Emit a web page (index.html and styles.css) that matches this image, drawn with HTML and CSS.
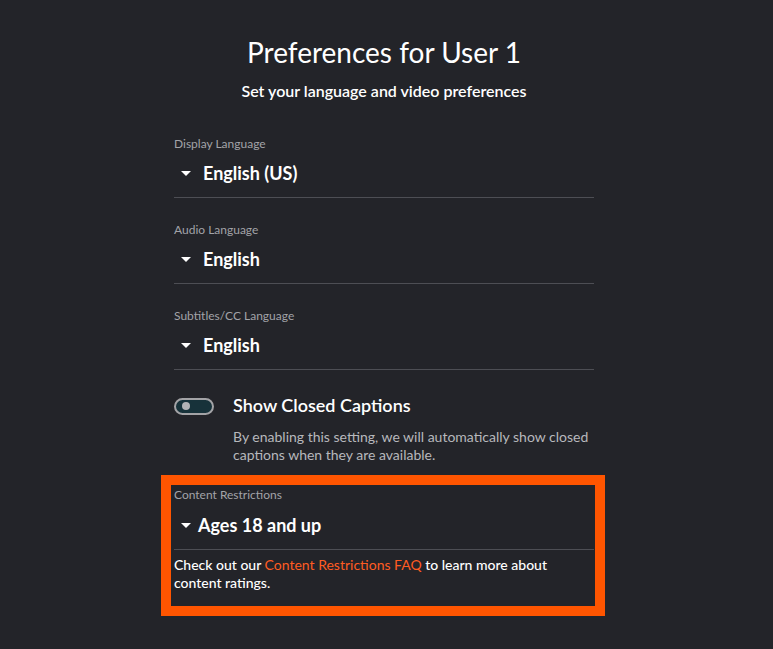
FILE: index.html
```html
<!DOCTYPE html>
<html lang="en">
<head>
<meta charset="utf-8">
<title>Preferences</title>
<link rel="stylesheet" href="styles.css">
</head>
<body>
<main class="prefs">
  <header class="head">
    <h1 class="title">Preferences for User 1</h1>
    <p class="subtitle">Set your language and video preferences</p>
  </header>

  <section class="field">
    <div class="label">Display Language</div>
    <div class="select"><span class="caret"></span><span class="value">English (US)</span></div>
  </section>

  <section class="field">
    <div class="label">Audio Language</div>
    <div class="select"><span class="caret"></span><span class="value">English</span></div>
  </section>

  <section class="field">
    <div class="label">Subtitles/CC Language</div>
    <div class="select"><span class="caret"></span><span class="value">English</span></div>
  </section>

  <section class="cc">
    <div class="cc-row">
      <span class="toggle"><span class="knob"></span></span>
      <span class="cc-title">Show Closed Captions</span>
    </div>
    <p class="cc-desc">By enabling this setting, we will automatically show closed captions when they are available.</p>
  </section>

  <section class="restrict">
    <div class="label">Content Restrictions</div>
    <div class="select select-tight"><span class="caret"></span><span class="value">Ages 18 and up</span></div>
    <p class="note">Check out our <a class="link" href="#">Content Restrictions FAQ</a> to learn more about content ratings.</p>
  </section>
</main>
</body>
</html>
```

FILE: styles.css
```css
html, body {
  margin: 0;
  padding: 0;
  background: #232429;
}
body {
  font-family: Lato, "Open Sans", sans-serif;
  color: #ffffff;
  padding-top: 35px;
}
.prefs {
  width: 420px;
  padding-right: 5px;
  margin: 0 auto;
}
.head {
  text-align: center;
  padding-bottom: 11px;
}
.title {
  margin: 0;
  font-size: 28px;
  font-weight: 400;
  line-height: 35px;
}
.subtitle {
  margin: 11px 0 0;
  font-size: 16px;
  font-weight: 600;
  line-height: 20px;
}
.field {
  padding-top: 24px;
}
.label {
  font-size: 12px;
  line-height: 16px;
  color: #a2a3a8;
}
.select {
  margin-top: 10px;
  display: flex;
  align-items: center;
  gap: 12px;
  padding-left: 7px;
  padding-bottom: 13px;
  border-bottom: 1px solid #4d4e54;
  font-size: 18px;
  font-weight: 700;
  line-height: 22px;
}
.select-tight {
  gap: 7px;
}
.caret {
  width: 0;
  height: 0;
  border-left: 5px solid transparent;
  border-right: 5px solid transparent;
  border-top: 5px solid #ffffff;
  margin-top: 1px;
}
.cc {
  padding-top: 24px;
}
.cc-row {
  display: flex;
  align-items: center;
  gap: 19px;
}
.toggle {
  box-sizing: border-box;
  width: 40px;
  height: 17px;
  border: 2px solid #a3a3a6;
  border-radius: 9px;
  background: #17323a;
  display: flex;
  align-items: center;
  padding-left: 6px;
  margin-top: 2px;
}
.knob {
  width: 8px;
  height: 8px;
  border-radius: 50%;
  background: #b3b3b6;
}
.cc-title {
  font-size: 18px;
  font-weight: 600;
  line-height: 22px;
}
.cc-desc {
  margin: 12px 0 0 59px;
  font-size: 14px;
  line-height: 18px;
  color: #b7b8bc;
}
.restrict {
  margin: 11px -11px 0 -13px;
  border: 10px solid #ff5500;
  padding: 2px 1px 14px 3px;
}
.restrict .select {
  margin-top: 11px;
}
.note {
  margin: 6px 0 0;
  font-size: 14px;
  font-weight: 500;
  line-height: 18px;
}
.link {
  color: #ff5c22;
  font-weight: 400;
  text-decoration: none;
}
```
